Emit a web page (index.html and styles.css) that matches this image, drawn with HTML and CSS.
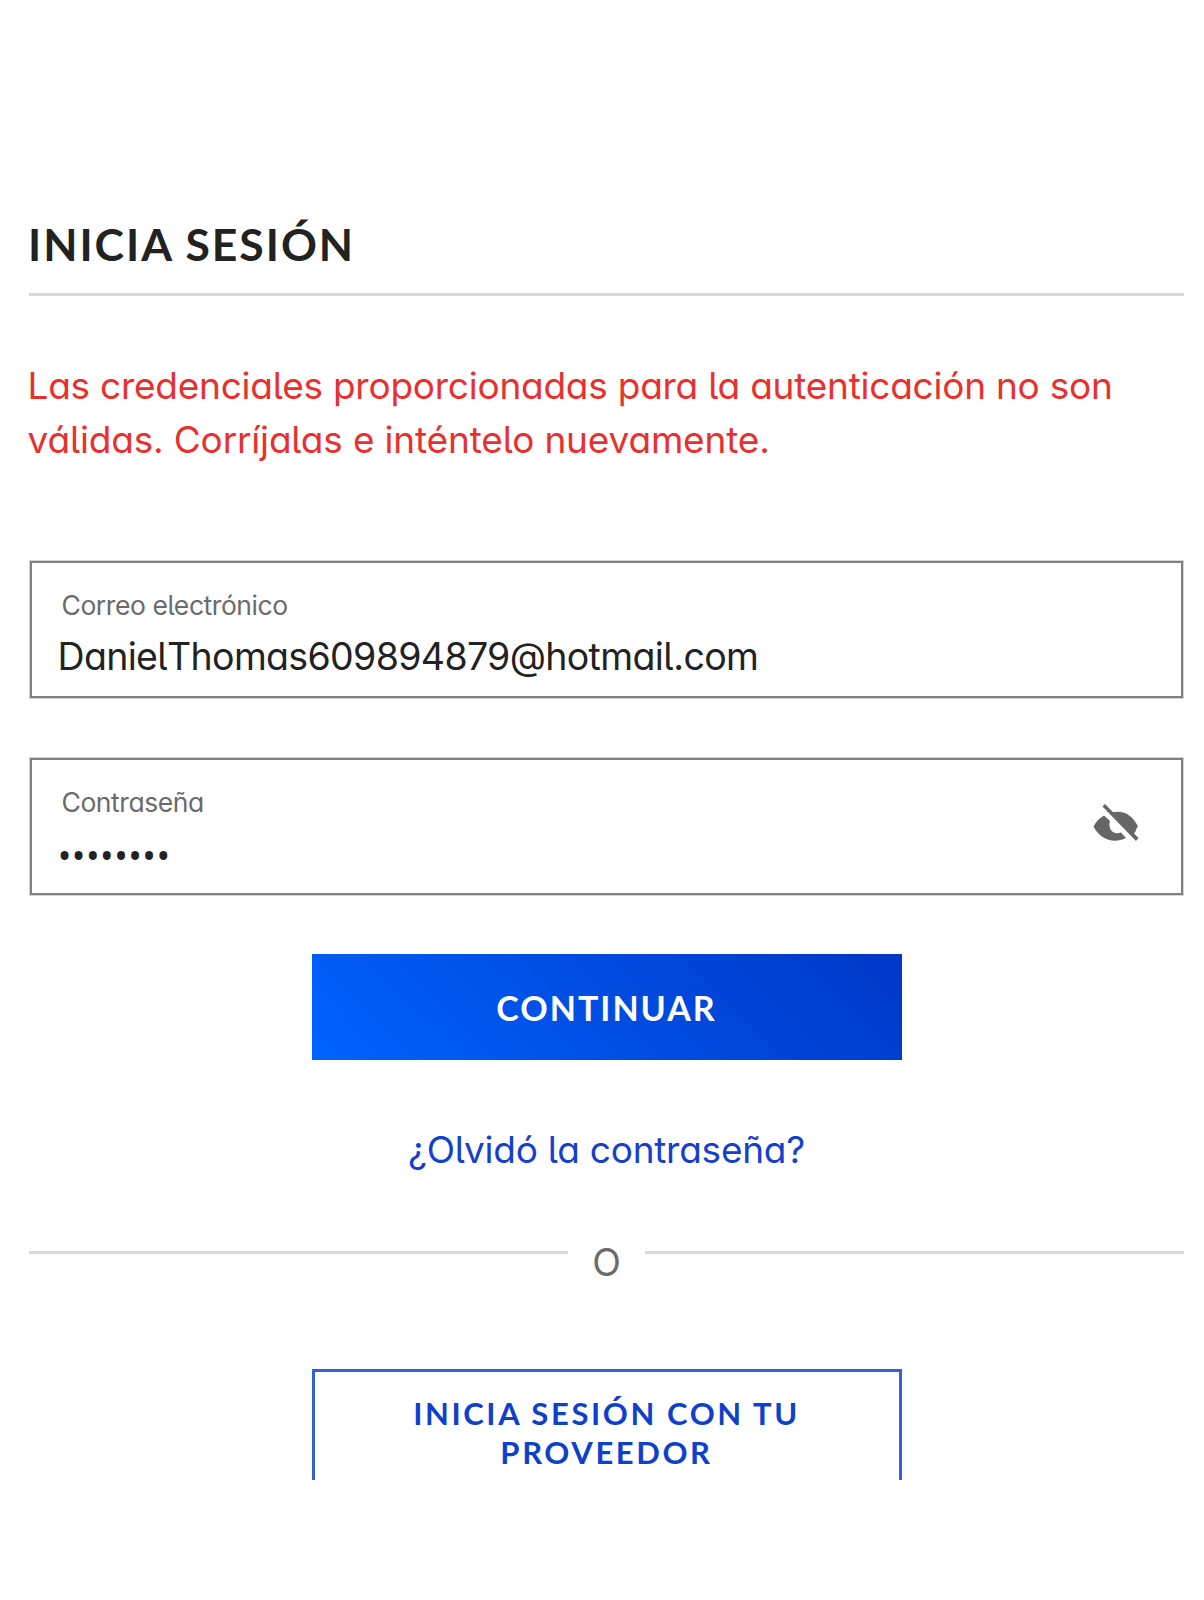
FILE: index.html
```html
<!DOCTYPE html>
<html lang="es">
<head>
<meta charset="utf-8">
<title>Inicia sesión</title>
<link rel="stylesheet" href="styles.css">
</head>
<body>
<main class="login">
  <h1 class="title">INICIA SESIÓN</h1>
  <p class="error">Las credenciales proporcionadas para la autenticación no son <span class="error-line">válidas. Corríjalas e inténtelo nuevamente.</span></p>
  <form class="form">
    <div class="field">
      <div class="field-body">
        <label class="label" for="email">Correo electrónico</label>
        <input class="input" id="email" type="text" value="DanielThomas609894879@hotmail.com">
      </div>
    </div>
    <div class="field">
      <div class="field-body">
        <label class="label" for="password">Contraseña</label>
        <input class="input input-password" id="password" type="password" value="password">
      </div>
      <svg class="eye" viewBox="0 0 46 38" aria-hidden="true">
        <path d="M19 8.500C31 6 39 11 45 22.500C42.500 24.500 44 28 39 31Z"/>
        <path d="M11 11.500L17 17C14.500 25 20 31.500 28 28.500L33 34C20 40.500 7 35 .5 22.500C3 18 6 14 11 11.500Z"/>
        <path d="M12 0L45.500 34L43 37L9.500 2.500Z"/>
      </svg>
    </div>
    <button class="submit" type="button">CONTINUAR</button>
  </form>
  <a class="forgot">¿Olvidó la contraseña?</a>
  <div class="divider"><span class="divider-text">O</span></div>
  <button class="provider" type="button">INICIA SESIÓN CON TU<br>PROVEEDOR</button>
</main>
</body>
</html>
```
FILE: styles.css
```css
* { box-sizing: border-box; }
body {
  margin: 0;
  background: #fff;
  color: #222;
  font-family: Inter, "Open Sans", sans-serif;
  font-feature-settings: "cv11", "cv05";
}
.login {
  display: flex;
  flex-direction: column;
  width: 1155px;
  margin-left: 29px;
  padding-top: 214px;
}
.title {
  margin: 0;
  padding-bottom: 19px;
  border-bottom: 3px solid #d8d8d8;
  font: 700 44.5px/60px Lato, sans-serif;
  letter-spacing: 1.98px;
  text-indent: -1px;
}
.error {
  margin: 63px 0 94px -1.5px;
  color: #e8302f;
  font-size: 37px;
  line-height: 54px;
  letter-spacing: -0.24px;
}
.error-line { letter-spacing: -0.17px; }
.form { display: flex; flex-direction: column; gap: 58px; }
.field {
  display: flex;
  height: 137px;
  margin: 0 1px 1px;
  padding-right: 42px;
  border: 2px solid #808080;
  box-shadow: 0 0 0 1px #d4d4d4;
  align-items: flex-start;
}
.field + .field { margin-top: 1px; }
.field-body { display: flex; flex: 1; flex-direction: column; padding: 25px 0 0 26.5px; }
.label {
  padding-left: 3px;
  color: #6b6b6b;
  font-size: 26.5px;
  line-height: 34px;
  letter-spacing: -0.44px;
}
.input {
  height: 54px;
  margin: 8px 0 0 -1px;
  padding: 0;
  border: 0;
  outline: 0;
  background: none;
  color: #222;
  font: 400 37.5px/54px Inter, "Open Sans", sans-serif;
  font-feature-settings: inherit;
  letter-spacing: -0.66px;
}
.input-password { margin-top: 10px; font-family: "Open Sans", sans-serif; letter-spacing: 0; }
.eye { width: 46px; height: 38px; margin-top: 44px; fill: #666; }
.submit, .provider {
  width: 590px;
  align-self: center;
  border: 0;
  font-family: Lato, sans-serif;
  font-weight: 700;
}
.submit {
  height: 106px;
  background: linear-gradient(45deg, #0063ff, #0037c6);
  color: #fff;
  font-size: 34px;
  letter-spacing: 2px;
}
.forgot {
  margin-top: 63px;
  color: #1440cc;
  font-size: 37px;
  line-height: 54px;
  letter-spacing: -0.24px;
  text-align: center;
}
.divider { display: flex; height: 54px; margin-top: 59px; color: #6b6b6b; }
.divider::before, .divider::after {
  content: "";
  flex: 1;
  height: 3px;
  margin-top: 15px;
  background: #d8d8d8;
}
.divider-text { width: 77px; font-size: 37.5px; line-height: 54px; text-align: center; }
.provider {
  height: 111px;
  margin-top: 79px;
  padding: 14px 0 0;
  border: solid #3561d4;
  border-width: 3px 3px 0;
  background: #fff;
  color: #0f40cc;
  font-size: 31px;
  line-height: 39px;
  letter-spacing: 2.6px;
  display: block;
  text-align: center;
}
```
